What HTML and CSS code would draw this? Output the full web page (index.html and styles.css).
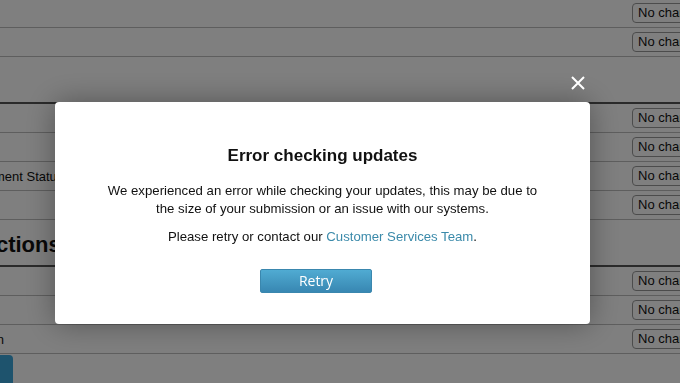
FILE: index.html
```html
<!DOCTYPE html>
<html lang="en">
<head>
  <meta charset="UTF-8" />
  <title>Review updates</title>
  <link rel="stylesheet" href="styles.css">
</head>
<body>
  <div class="page">
    <div class="row"><span class="label">Name</span><span class="select">No changes</span></div>
    <div class="row"><span class="label">Date</span><span class="select">No changes</span></div>
    <div class="section"><h2>Info</h2></div>
    <div class="row"><span class="label">Type</span><span class="select">No changes</span></div>
    <div class="row"><span class="label">Size</span><span class="select">No changes</span></div>
    <div class="row"><span class="label">Management Status</span><span class="select">No changes</span></div>
    <div class="row"><span class="label">Owner</span><span class="select">No changes</span></div>
    <div class="section"><h2>Objections</h2></div>
    <div class="row"><span class="label">Plan</span><span class="select">No changes</span></div>
    <div class="row"><span class="label">Term</span><span class="select">No changes</span></div>
    <div class="row"><span class="label">Extension</span><span class="select">No changes</span></div>
    <button class="save">Save</button>
  </div>

  <div class="overlay">
    <div class="modal">
      <button class="close" aria-label="Close">
        <svg width="14" height="14" viewBox="0 0 14 14">
          <path d="M1 1 L13 13 M13 1 L1 13" stroke="#fff" stroke-width="2" />
        </svg>
      </button>
      <h3>Error checking updates</h3>
      <p>We experienced an error while checking your updates, this may be due to<br>the size of your submission or an issue with our systems.</p>
      <p class="contact">Please retry or contact our <a href="#">Customer Services Team</a>.</p>
      <button class="retry">Retry</button>
    </div>
  </div>
</body>
</html>
```

FILE: styles.css
```css
* {
  box-sizing: border-box;
}

body {
  margin: 0;
  font-family: 'Liberation Sans', Arial, sans-serif;
  background: #fff;
  color: #111;
  overflow: hidden;
}

.page {
  width: 805px;
  margin: -1px 0 0 -53px;
}

.row {
  display: flex;
  align-items: center;
  height: 29px;
  border-bottom: 1px solid #bdbdbd;
  font-size: 13px;
}

.label {
  white-space: nowrap;
}

.select {
  margin-left: auto;
  width: 120px;
  height: 20px;
  line-height: 18px;
  padding: 0 5px;
  border: 1px solid #999;
  border-radius: 4px;
  background: #fff;
  font-size: 13px;
  white-space: nowrap;
}

.section {
  height: 47px;
  border-bottom: 2px solid #555;
}

.section h2 {
  margin: 0;
  padding-top: 12px;
  font-size: 22px;
  line-height: 26px;
  font-weight: bold;
}

.save {
  margin-top: 1px;
  width: 66px;
  height: 32px;
  border: none;
  border-radius: 4px;
  background: #3ca6da;
  color: #fff;
  font-size: 13px;
}

.overlay {
  position: fixed;
  top: 0;
  left: 0;
  right: 0;
  bottom: 0;
  background: rgba(0, 0, 0, 0.5);
  padding: 102px 0 0 55px;
}

.modal {
  position: relative;
  width: 535px;
  height: 222px;
  background: #fff;
  border-radius: 4px;
  text-align: center;
  padding: 44px 20px 0;
  box-shadow: 0 0 30px rgba(0, 0, 0, 0.35);
}

.close {
  position: absolute;
  top: -26px;
  right: 5px;
  width: 14px;
  height: 14px;
  padding: 0;
  border: none;
  background: none;
  line-height: 0;
}

.modal h3 {
  margin: 0;
  font-size: 17px;
  line-height: 20px;
  font-weight: bold;
  color: #111;
}

.modal p {
  margin: 16px 0 0;
  font-size: 13.2px;
  line-height: 18px;
  color: #111;
}

.modal p.contact {
  margin-top: 10px;
}

.modal a {
  color: #3b8aaa;
  text-decoration: none;
}

.retry {
  margin: 23px 0 0 -13px;
  width: 112px;
  height: 24px;
  border: 1px solid #3a87ae;
  border-radius: 2px;
  background: linear-gradient(#50abd2, #3887b2);
  color: #fff;
  font-family: 'Open Sans', sans-serif;
  font-size: 14px;
  line-height: 20px;
  padding: 0;
}
```
